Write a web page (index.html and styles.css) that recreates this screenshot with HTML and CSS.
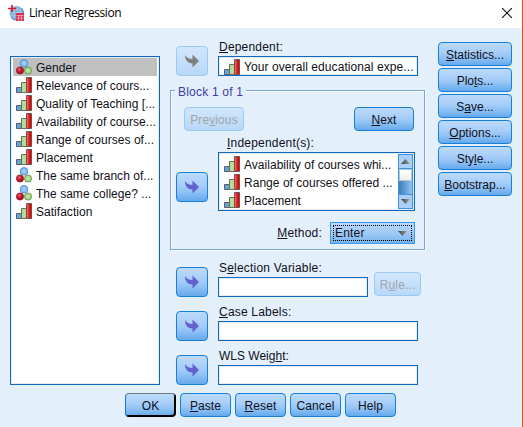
FILE: index.html
```html
<!DOCTYPE html>
<html lang="en">
<head>
<meta charset="utf-8">
<title>Linear Regression</title>
<link rel="stylesheet" href="styles.css">
</head>
<body>
<svg class="defs" aria-hidden="true">
  <defs>
    <linearGradient id="red"><stop offset="0" stop-color="#ff8078"/><stop offset=".5" stop-color="#f01818"/><stop offset="1" stop-color="#b80808"/></linearGradient>
    <radialGradient id="ballRed" cx=".4" cy=".35"><stop offset="0" stop-color="#e8707c"/><stop offset=".6" stop-color="#c81830"/><stop offset="1" stop-color="#b01028"/></radialGradient>
    <radialGradient id="ballBlue"><stop offset="0" stop-color="#a8d4ff"/><stop offset="1" stop-color="#78b4f4"/></radialGradient>
    <radialGradient id="ballGreen"><stop offset="0" stop-color="#c8ecac"/><stop offset="1" stop-color="#94cc70"/></radialGradient>
    <linearGradient id="tri" x1="0" x2="1"><stop offset="0" stop-color="#404040"/><stop offset="1" stop-color="#a0a0a0"/></linearGradient>
    <symbol id="bars" viewBox="0 0 16 16">
      <path d="M.5 10.500h5v5h-5z" fill="#68a0dc" stroke="#56606c"/>
      <path d="M5.500 5.500h5v10h-5z" fill="#b4dc94" stroke="#64705c"/>
      <path d="M10.500.5h5v15h-5z" fill="url(#red)" stroke="#685454"/>
    </symbol>
    <symbol id="balls" viewBox="0 0 16 16">
      <circle cx="8" cy="4.300" r="3.800" fill="url(#ballBlue)" stroke="#4880c8" stroke-width=".8"/>
      <circle cx="4" cy="11.500" r="3.600" fill="url(#ballRed)" stroke="#901828" stroke-width=".8"/>
      <circle cx="12" cy="11.500" r="3.600" fill="url(#ballGreen)" stroke="#5c8c48" stroke-width=".8"/>
    </symbol>
    <symbol id="arrow" viewBox="0 0 14 14">
      <path d="M0 1C1.500 3.600 4 5 7.500 5V.5L14 7 7.500 13.500V9.500C3 9.500 0 6.500 0 1z" fill="currentColor"/>
    </symbol>
  </defs>
</svg>
<div class="window">
  <header class="titlebar">
    <svg class="logo" viewBox="0 0 16 16">
      <circle cx="8.500" cy="8" r="7" fill="#7fb0da"/>
      <path d="M3 4.500h11M2 7.500h13M2 10.500h8M6 2v12M9.500 1v14M12.500 3v7" stroke="#a8cce8" stroke-width=".8"/>
      <path d="M13 3a7 7 0 0 1 2.500 6M3 12.500a7 7 0 0 0 6 2.500" stroke="#4078b0" fill="none"/>
      <path d="M4 0v7M0 3.500h8" stroke="#d81828" stroke-width="1.700"/>
      <path d="M8 8h8v8H8z" fill="#d43450"/>
      <path d="M8.500 10.500h7M8.500 13h7M10.500 10v6M13.300 10v6" stroke="#f4b8c4" stroke-width=".7"/>
    </svg>
    <h1 class="title">Linear Regression</h1>
    <svg class="close" viewBox="0 0 10 10"><path d="M0 0l10 10M10 0L0 10" stroke="#111" stroke-width="1.100"/></svg>
  </header>

  <main class="content">
    <ul class="list variables">
      <li class="row selected"><svg class="icon"><use href="#balls"/></svg><span>Gender</span></li>
      <li class="row"><svg class="icon"><use href="#bars"/></svg><span>Relevance of cours...</span></li>
      <li class="row"><svg class="icon"><use href="#bars"/></svg><span>Quality of Teaching [...</span></li>
      <li class="row"><svg class="icon"><use href="#bars"/></svg><span>Availability of course...</span></li>
      <li class="row"><svg class="icon"><use href="#bars"/></svg><span>Range of courses of...</span></li>
      <li class="row"><svg class="icon"><use href="#bars"/></svg><span>Placement</span></li>
      <li class="row"><svg class="icon"><use href="#balls"/></svg><span>The same branch of...</span></li>
      <li class="row"><svg class="icon"><use href="#balls"/></svg><span>The same college? ...</span></li>
      <li class="row"><svg class="icon"><use href="#bars"/></svg><span>Satifaction</span></li>
    </ul>

    <div class="center">
      <div class="field-row">
        <button class="move disabled"><svg><use href="#arrow"/></svg></button>
        <div class="field">
          <span class="label"><u>D</u>ependent:</span>
          <div class="box"><svg class="icon"><use href="#bars"/></svg><span>Your overall educational expe...</span></div>
        </div>
      </div>

      <section class="group">
        <h2 class="legend">Block 1 of 1</h2>
        <div class="nav">
          <button class="btn disabled">Pre<u>v</u>ious</button>
          <button class="btn"><u>N</u>ext</button>
        </div>
        <div class="field-row independent">
          <button class="move"><svg><use href="#arrow"/></svg></button>
          <div class="field">
            <span class="label"><u>I</u>ndependent(s):</span>
            <div class="list chosen">
              <ul class="rows">
                <li class="row"><svg class="icon"><use href="#bars"/></svg><span>Availability of courses whi...</span></li>
                <li class="row"><svg class="icon"><use href="#bars"/></svg><span>Range of courses offered ...</span></li>
                <li class="row"><svg class="icon"><use href="#bars"/></svg><span>Placement</span></li>
              </ul>
              <div class="scrollbar">
                <div class="step"><svg viewBox="0 0 9 5"><path d="M0 5L4.500 0 9 5z" fill="url(#tri)"/></svg></div>
                <div class="track"><div class="thumb"></div></div>
                <div class="step"><svg viewBox="0 0 9 5"><path d="M0 0h9L4.500 5z" fill="url(#tri)"/></svg></div>
              </div>
            </div>
          </div>
        </div>
        <div class="method">
          <span class="label"><u>M</u>ethod:</span>
          <div class="select"><div class="focus"><span>Enter</span><svg viewBox="0 0 9 5"><path d="M0 0h9L4.500 5z" fill="url(#tri)"/></svg></div></div>
        </div>
      </section>

      <div class="field-row selection">
        <button class="move"><svg><use href="#arrow"/></svg></button>
        <div class="field">
          <span class="label">S<u>e</u>lection Variable:</span>
          <div class="box short"></div>
        </div>
        <button class="btn rule disabled">R<u>u</u>le...</button>
      </div>
      <div class="field-row">
        <button class="move"><svg><use href="#arrow"/></svg></button>
        <div class="field">
          <span class="label"><u>C</u>ase Labels:</span>
          <div class="box"></div>
        </div>
      </div>
      <div class="field-row">
        <button class="move"><svg><use href="#arrow"/></svg></button>
        <div class="field">
          <span class="label weight">WLS Weig<u>h</u>t:</span>
          <div class="box"></div>
        </div>
      </div>
    </div>

    <nav class="side">
      <button class="btn"><u>S</u>tatistics...</button>
      <button class="btn">Plo<u>t</u>s...</button>
      <button class="btn">S<u>a</u>ve...</button>
      <button class="btn"><u>O</u>ptions...</button>
      <button class="btn">Sty<u>l</u>e...</button>
      <button class="btn"><u>B</u>ootstrap...</button>
    </nav>
  </main>

  <footer class="actions">
    <button class="btn default">OK</button>
    <button class="btn"><u>P</u>aste</button>
    <button class="btn"><u>R</u>eset</button>
    <button class="btn">Cancel</button>
    <button class="btn">Help</button>
  </footer>
</div>
</body>
</html>
```
FILE: styles.css
```css
* { box-sizing: border-box; margin: 0; padding: 0; }
body { font: 12px/18px "Liberation Sans", Arial, sans-serif; letter-spacing: .2px; color: #101018; overflow: hidden; }
ul { list-style: none; }
svg { display: block; flex: none; }
u { text-underline-offset: 1px; text-decoration-thickness: 1px; text-decoration-skip-ink: none; }
.defs { position: absolute; width: 0; height: 0; }

.window { width: 523px; height: 427px; display: flex; flex-direction: column; background: #e3effb; border-right: 1px solid #e04a1c; }
.titlebar { height: 28px; flex: none; display: flex; align-items: center; background: #fff; padding: 0 10px 3px 8px; }
.logo { width: 16px; height: 16px; }
.title { flex: 1; margin-left: 5px; font: 12px/18px "Open Sans", "Noto Sans", sans-serif; letter-spacing: -.43px; color: #000; }
.close { width: 10px; height: 10px; }

.content { height: 357px; flex: none; display: flex; padding-left: 10px; }
.list { background: #fff; border: 1px solid #1268b8; box-shadow: inset 0 0 0 1px #e4ecf4; }
.variables { width: 150px; height: 329px; margin-top: 28px; padding: 1px 2px; }
.row { height: 18px; display: flex; align-items: center; gap: 4px; padding: 0 0 0 3px; white-space: nowrap; letter-spacing: .03px; }
.row span { padding-top: 1px; }
.selected { background: #c0c0c0; }
.icon { width: 16px; height: 16px; }

.center { width: 255px; margin-left: 10px; }
.field-row { height: 44px; display: flex; align-items: flex-end; gap: 10px; padding-left: 6px; }
.center > .field-row:first-child { height: 48px; }
.field { width: 200px; display: flex; flex-direction: column; }
.label { padding-left: 1px; line-height: 18px; }
.weight { letter-spacing: 0; }
.box { height: 20px; display: flex; align-items: center; gap: 4px; padding: 1px 0 0 5px; background: #fff; border: 1px solid #1268b8; box-shadow: inset 0 0 0 1px #e4ecf4; white-space: nowrap; overflow: hidden; letter-spacing: .08px; }
.short { width: 150px; }
.selection .field { width: 150px; }
.selection { gap: 10px; height: 47px; }

.move, .btn { border: 1px solid #1680dc; border-radius: 4px; background: linear-gradient(#bcdafc, #a6cdf8 45%, #8cc0f4 70%, #64a9ec); }
.move { width: 32px; height: 30px; flex: none; display: flex; align-items: center; justify-content: center; color: #6560d0; }
.move svg { width: 14px; height: 14px; }
.btn { height: 24px; font: inherit; letter-spacing: .1px; color: #101018; white-space: nowrap; padding-top: 1px; }
.side .btn { letter-spacing: 0; }
.btn.disabled, .move.disabled { border-color: #98c8f4; background: linear-gradient(#d2e6fc, #b8d8f8); color: #a0a4a8; }
.move.disabled { color: #808080; }

.group { height: 160px; margin-top: 14px; border: 1px solid #78a8d8; box-shadow: inset 1px 1px #f6fafe, 1px 1px #f6fafe; }
.legend { width: fit-content; height: 16px; margin: -8px 0 0 4px; padding: 0 3px; font: inherit; line-height: 18px; color: #3c3ca8; background: #e3effb; }
.nav { display: flex; justify-content: space-between; padding: 8px 10px 0 13px; }
.nav .btn { width: 60px; }
.independent { height: 80px; padding-left: 5px; }
.independent .move { margin-bottom: 9px; }
.independent .field { width: 197px; }
.independent .label { padding-left: 9px; }
.chosen { height: 59px; display: flex; }
.rows { flex: 1; padding: 2px 0 0 2px; overflow: hidden; }
.scrollbar { width: 15px; margin: 1px; display: flex; flex-direction: column; border: 1px solid #3c94e4; }
.step { height: 13px; flex: none; display: flex; align-items: center; justify-content: center; background: #aacff8; }
.step svg { width: 9px; height: 5px; }
.track { flex: 1; border: solid #3c94e4; border-width: 1px 0; background: linear-gradient(90deg, #3c7cb8, #90c4f4); }
.thumb { height: 12px; background: linear-gradient(#fff, #eee); border: 1px solid #bcc4cc; }
.method { display: flex; justify-content: flex-end; align-items: center; gap: 8px; margin-top: 11px; padding-right: 9px; }
.select { width: 85px; height: 22px; padding: 2px; border: 1px solid #3c98e8; background: linear-gradient(#b8d8fc, #9cc8f6 55%, #74b2ee); }
.focus { height: 16px; display: flex; align-items: center; justify-content: space-between; padding: 0 4px 0 1px; border: 1px dotted #000; }
.focus svg { width: 9px; height: 5px; }
.rule { width: 47px; margin: 0 0 1px -4px; flex: none; }

.side { display: flex; flex-direction: column; gap: 2px; width: 74px; margin: 14px 0 0 13px; }
.actions { display: flex; gap: 4px; padding: 8px 0 0 125px; }
.actions .btn { width: 51px; }
.actions .default { border-color: #707880 #000 #000 #1878c8; box-shadow: inset -1px -1px #000; }
```
